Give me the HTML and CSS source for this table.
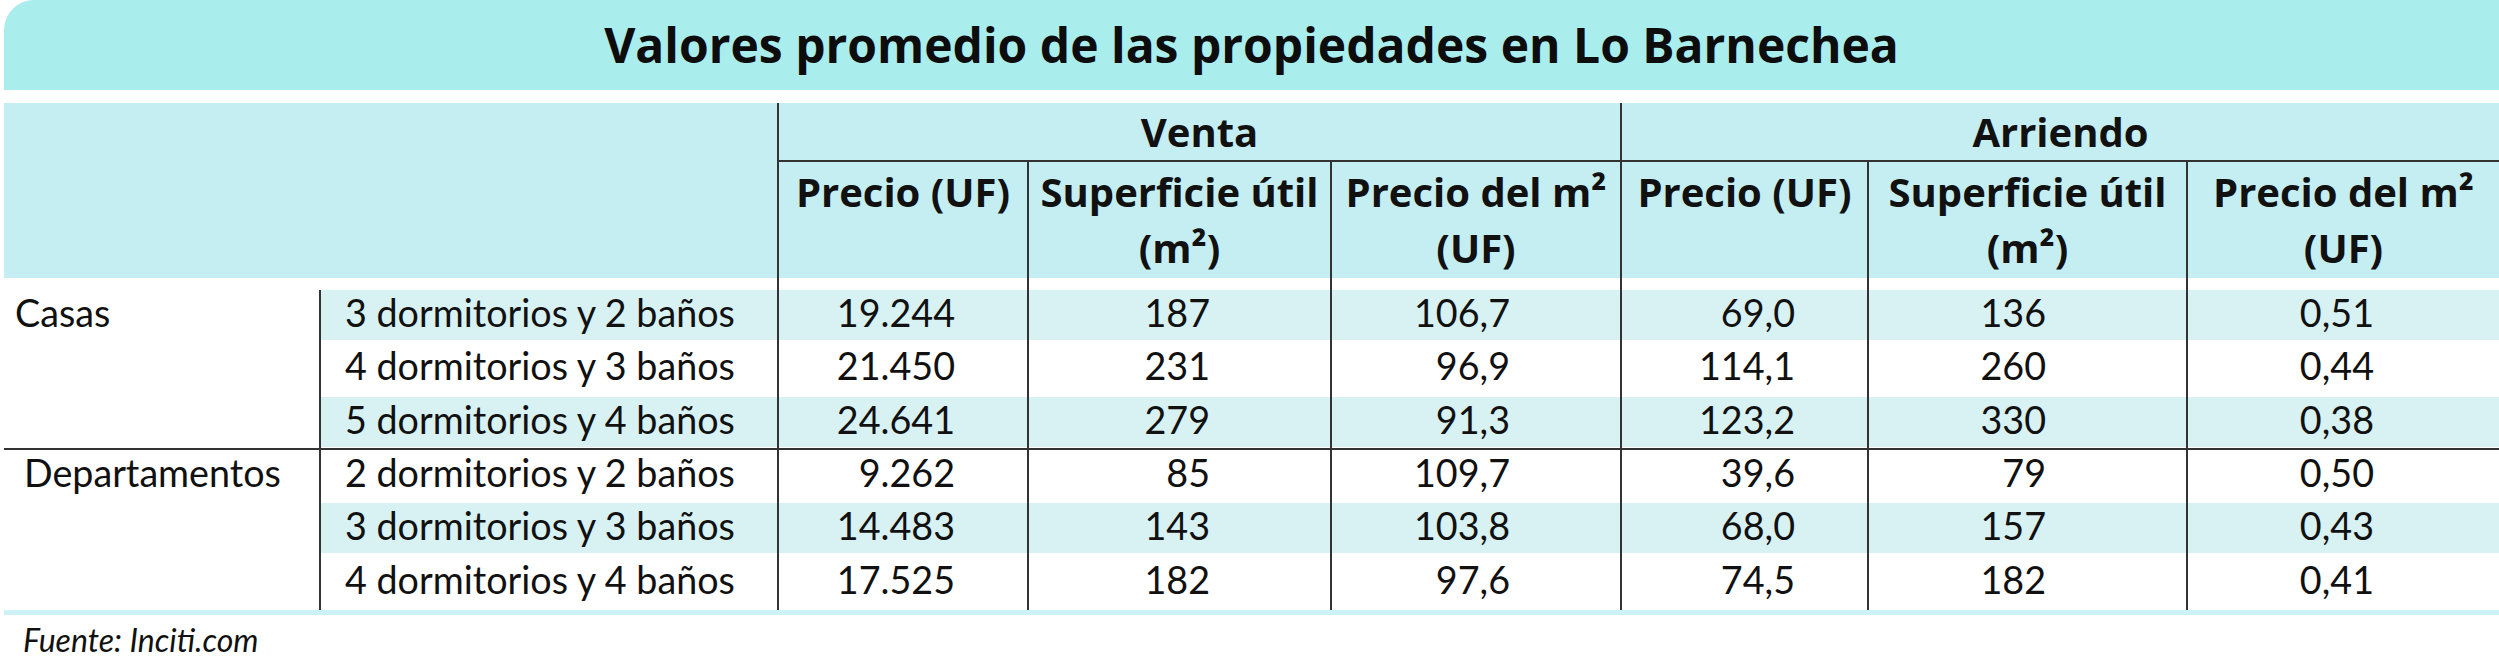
FILE: index.html
```html
<!DOCTYPE html>
<html lang="es">
<head>
<meta charset="utf-8">
<title>Valores promedio de las propiedades en Lo Barnechea</title>
<link rel="stylesheet" href="styles.css">
</head>
<body>
<div class="figure">
  <h1 class="title">Valores promedio de las propiedades en Lo Barnechea</h1>
  <div class="table">
    <div class="blank"></div>
    <div class="grp">Venta</div>
    <div class="grp">Arriendo</div>

    <div class="sub">Precio (UF)</div>
    <div class="sub">Superficie útil<br>(m²)</div>
    <div class="sub">Precio del m²<br>(UF)</div>
    <div class="sub">Precio (UF)</div>
    <div class="sub">Superficie útil<br>(m²)</div>
    <div class="sub">Precio del m²<br>(UF)</div>

    <div class="kind casas sep">Casas</div>
    <div class="lbl alt">3 dormitorios y 2 baños</div>
    <div class="num c1 alt">19.244</div>
    <div class="num c2 alt">187</div>
    <div class="num c3 alt">106,7</div>
    <div class="num c4 alt">69,0</div>
    <div class="num c5 alt">136</div>
    <div class="num c6 alt">0,51</div>

    <div class="lbl">4 dormitorios y 3 baños</div>
    <div class="num c1">21.450</div>
    <div class="num c2">231</div>
    <div class="num c3">96,9</div>
    <div class="num c4">114,1</div>
    <div class="num c5">260</div>
    <div class="num c6">0,44</div>

    <div class="lbl alt sep">5 dormitorios y 4 baños</div>
    <div class="num c1 alt sep">24.641</div>
    <div class="num c2 alt sep">279</div>
    <div class="num c3 alt sep">91,3</div>
    <div class="num c4 alt sep">123,2</div>
    <div class="num c5 alt sep">330</div>
    <div class="num c6 alt sep">0,38</div>

    <div class="kind deptos">Departamentos</div>
    <div class="lbl">2 dormitorios y 2 baños</div>
    <div class="num c1">9.262</div>
    <div class="num c2">85</div>
    <div class="num c3">109,7</div>
    <div class="num c4">39,6</div>
    <div class="num c5">79</div>
    <div class="num c6">0,50</div>

    <div class="lbl alt">3 dormitorios y 3 baños</div>
    <div class="num c1 alt">14.483</div>
    <div class="num c2 alt">143</div>
    <div class="num c3 alt">103,8</div>
    <div class="num c4 alt">68,0</div>
    <div class="num c5 alt">157</div>
    <div class="num c6 alt">0,43</div>

    <div class="lbl">4 dormitorios y 4 baños</div>
    <div class="num c1">17.525</div>
    <div class="num c2">182</div>
    <div class="num c3">97,6</div>
    <div class="num c4">74,5</div>
    <div class="num c5">182</div>
    <div class="num c6">0,41</div>
  </div>
  <div class="strip"></div>
  <p class="source">Fuente: Inciti.com</p>
</div>
</body>
</html>
```
FILE: styles.css
```css
html, body {
  margin: 0;
  padding: 0;
  background: #ffffff;
}

body {
  color: #111111;
  font-family: Lato, "Open Sans", sans-serif;
}

.figure {
  margin-left: 4px;
  width: 2495px;
}

.title {
  margin: 0;
  height: 90px;
  line-height: 90px;
  background: #aaeded;
  border-top-left-radius: 30px;
  text-align: center;
  font-family: "Open Sans", sans-serif;
  font-weight: 700;
  font-size: 48px;
  color: #0d0d0d;
}

.table {
  margin-top: 13px;
  display: grid;
  grid-template-columns: 315px 458px 250px 303px 290px 247px 319px 313px;
  grid-template-rows: 59px 128px repeat(6, 53.33px);
}

.blank {
  grid-column: span 2;
  grid-row: span 2;
  background: linear-gradient(#c5eef2 0 175px, #ffffff 175px);
}

.grp {
  grid-column: span 3;
  background: #c5eef2;
  border-left: 2px solid #333333;
  border-bottom: 2px solid #333333;
  text-align: center;
  font-family: "Open Sans", sans-serif;
  font-weight: 700;
  font-size: 40px;
  line-height: 57px;
}

.sub {
  background: linear-gradient(#c5eef2 0 116px, #ffffff 116px);
  border-left: 2px solid #333333;
  padding-top: 2px;
  text-align: center;
  font-family: "Open Sans", sans-serif;
  font-weight: 700;
  font-size: 40px;
  line-height: 56px;
}

.kind,
.lbl,
.num {
  font-size: 37.7px;
  line-height: 45px;
  white-space: nowrap;
}

.kind {
  grid-row: span 3;
  grid-column: 1;
}

.casas {
  padding-left: 11px;
}

.deptos {
  padding-left: 20px;
}

.lbl {
  border-left: 2px solid #333333;
  padding-left: 24px;
}

.num {
  border-left: 2px solid #333333;
  text-align: right;
}

.alt {
  background: linear-gradient(#d8f1f3 0 50px, transparent 50px);
}

.sep {
  border-bottom: 2px solid #333333;
}

.c1 { padding-right: 72px; }
.c2 { padding-right: 120px; }
.c3 { padding-right: 110px; }
.c4 { padding-right: 72px; }
.c5 { padding-right: 140px; }
.c6 { padding-right: 125px; }

.strip {
  height: 5px;
  background: #cdf2f6;
}

.source {
  margin: 5px 0 0 19px;
  font-style: italic;
  font-size: 32px;
  line-height: 40px;
}
```
